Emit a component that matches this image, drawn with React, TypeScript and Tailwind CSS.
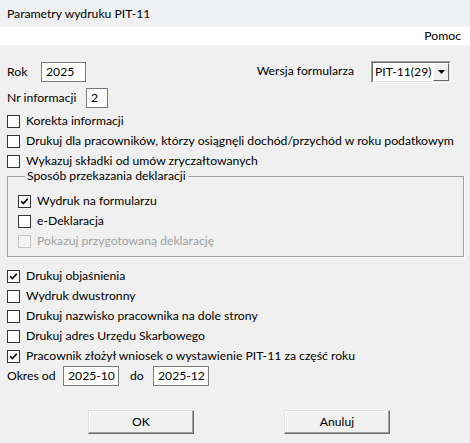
import type { ReactNode } from 'react';

function CheckBox({ checked = false, disabled = false }: { checked?: boolean; disabled?: boolean }) {
  return (
    <span
      className={`flex h-[13px] w-[13px] shrink-0 items-center justify-center border ${
        disabled ? 'border-[#c4c4c4] bg-[#f4f4f4]' : 'border-[#333333] bg-white'
      }`}
    >
      {checked && (
        <svg width="9" height="9" viewBox="0 0 9 9">
          <path d="M1.2 4.2 L3.4 6.6 L7.8 1.8" stroke="#000" strokeWidth="1.7" fill="none" />
        </svg>
      )}
    </span>
  );
}

function CheckRow({ label, checked, disabled }: { label: string; checked?: boolean; disabled?: boolean }) {
  return (
    <label className="flex h-[20px] items-center gap-[6px] whitespace-nowrap">
      <CheckBox checked={checked} disabled={disabled} />
      <span className={disabled ? 'text-[#a0a0a0]' : 'text-black'}>{label}</span>
    </label>
  );
}

function Field({ value, className }: { value: string; className: string }) {
  return (
    <div className={`flex h-[20px] items-center border border-[#7a7a7a] bg-white pl-[4px] ${className}`}>
      {value}
    </div>
  );
}

function Button({ children, className }: { children: ReactNode; className: string }) {
  return (
    <button
      className={`flex h-[24px] w-[106px] items-center justify-center border border-t-[#e3e3e3] border-l-[#e3e3e3] border-b-[#696969] border-r-[#696969] bg-[#f0f0f0] shadow-[inset_-1px_-1px_0_#a0a0a0,inset_1px_1px_0_#ffffff] ${className}`}
    >
      {children}
    </button>
  );
}

export default function App() {
  return (
    <div className="flex h-[443px] w-[470px] flex-col bg-[#f0f0f0] font-['Lato',sans-serif] text-[12.2px] leading-[16px] text-black">
      {/* Title bar */}
      <div className="flex h-[27px] items-center bg-[#eff0f2] px-[7px]">Parametry wydruku PIT-11</div>

      {/* Menu */}
      <div className="flex h-[18px] items-center justify-end bg-white pr-[9px]">Pomoc</div>

      <div className="flex flex-col pl-[7px]">
        {/* Rok / Wersja */}
        <div className="mt-[16px] flex h-[22px] items-center whitespace-nowrap">
          <span className="w-[34px]">Rok</span>
          <Field value="2025" className="w-[45px]" />
          <span className="ml-auto mb-[3px]">Wersja formularza</span>
          <div className="ml-[17px] mr-[19px] flex h-[22px] w-[80px] border border-t-[#a0a0a0] border-l-[#a0a0a0] border-b-white border-r-white">
            <div className="flex flex-1 items-center border border-t-[#696969] border-l-[#696969] border-b-[#e3e3e3] border-r-[#e3e3e3] bg-white">
              <span className="flex-1 pl-[2px]">PIT-11(29)</span>
              <span className="flex h-full w-[16px] items-center justify-center border border-t-[#ffffff] border-l-[#ffffff] border-b-[#696969] border-r-[#696969] bg-[#f0f0f0]">
                <svg width="7" height="4" viewBox="0 0 7 4">
                  <path d="M0 0 H7 L3.5 4 Z" fill="#000" />
                </svg>
              </span>
            </div>
          </div>
        </div>

        {/* Nr informacji */}
        <div className="mt-[5px] flex h-[20px] items-center">
          <span className="w-[79px]">Nr informacji</span>
          <Field value="2" className="w-[22px]" />
        </div>

        <div className="mt-[3px] flex flex-col">
          <CheckRow label="Korekta informacji" />
          <CheckRow label="Drukuj dla pracowników, którzy osiągnęli dochód/przychód w roku podatkowym" />
          <CheckRow label="Wykazuj składki od umów zryczałtowanych" />
        </div>

        {/* Group */}
        <fieldset className="-mt-[3px] w-[457px] border border-[#a0a0a0] pt-[7px] pb-[5px] pl-[10px] shadow-[1px_1px_0_#ffffff]">
          <legend className="ml-[7px] px-[2px]">Sposób przekazania deklaracji</legend>
          <CheckRow label="Wydruk na formularzu" checked />
          <CheckRow label="e-Deklaracja" />
          <CheckRow label="Pokazuj przygotowaną deklarację" disabled />
        </fieldset>

        <div className="mt-[9px] flex flex-col">
          <CheckRow label="Drukuj objaśnienia" checked />
          <CheckRow label="Wydruk dwustronny" />
          <CheckRow label="Drukuj nazwisko pracownika na dole strony" />
          <CheckRow label="Drukuj adres Urzędu Skarbowego" />
          <CheckRow label="Pracownik złożył wniosek o wystawienie PIT-11 za część roku" checked />
        </div>

        {/* Okres */}
        <div className="flex h-[20px] items-center">
          <span className="w-[56px]">Okres od</span>
          <Field value="2025-10" className="w-[56px]" />
          <span className="ml-[11px] w-[23px]">do</span>
          <Field value="2025-12" className="w-[56px]" />
        </div>

        {/* Buttons */}
        <div className="mt-[24px] flex">
          <Button className="ml-[81px]">OK</Button>
          <Button className="ml-[90px]">Anuluj</Button>
        </div>
      </div>
    </div>
  );
}
